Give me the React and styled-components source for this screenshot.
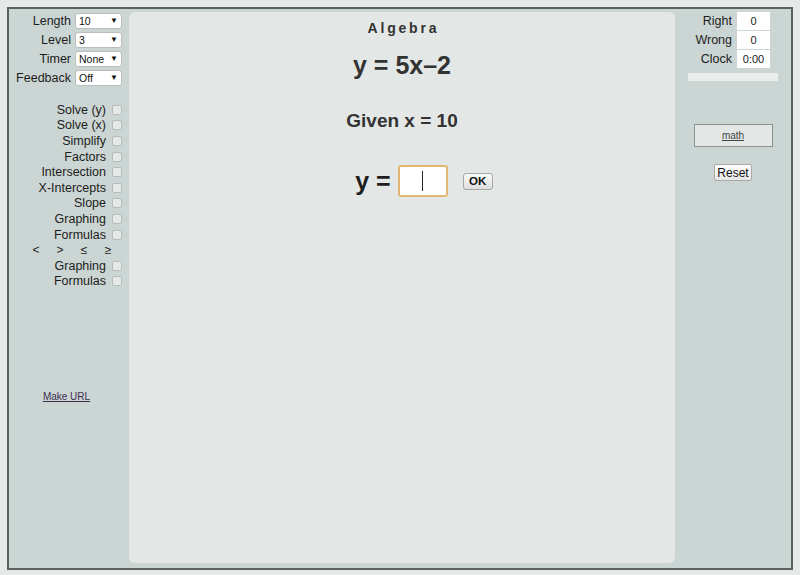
import React from 'react';
import styled, { createGlobalStyle } from 'styled-components';

const GlobalStyle = createGlobalStyle`
  body {
    margin: 0;
    background: #e6e9e8;
    font-family: "Liberation Sans", Arial, sans-serif;
  }
`;

const Frame = styled.div`
  margin: 7px;
  width: 782px;
  height: 559px;
  border: 2px solid #59625f;
  background: #cbd5d3;
  display: grid;
  grid-template-columns: 120px 546px 116px;
`;

const LeftPanel = styled.div`
  padding-top: 2px;
  display: flex;
  flex-direction: column;
`;

const SelectRow = styled.div`
  height: 19px;
  display: flex;
  align-items: center;
`;

const FieldLabel = styled.span`
  width: 62px;
  text-align: right;
  font-size: 12.5px;
  color: #1d1d1d;
  margin-right: 4px;
`;

const SelectBox = styled.div`
  width: 47px;
  height: 16px;
  box-sizing: border-box;
  background: #fff;
  border: 1px solid #b9bebd;
  border-radius: 3px;
  display: flex;
  align-items: center;
  justify-content: space-between;
  padding: 0 3px 0 3px;
  font-size: 10.5px;
  color: #111;
`;

const Arrow = styled.span`
  font-size: 8px;
  color: #111;
`;

const CheckList = styled.div`
  margin-top: 15px;
  display: flex;
  flex-direction: column;
`;

const CheckRow = styled.div`
  height: 15.6px;
  display: flex;
  align-items: center;
  justify-content: flex-end;
  padding-right: 7px;
  font-size: 12.5px;
  color: #1d1d1d;
`;

const Box = styled.span`
  width: 10px;
  height: 10px;
  box-sizing: border-box;
  margin-left: 6px;
  border: 1px solid #b5bcbb;
  border-radius: 2px;
  background: #e5e9e8;
`;

const SymbolRow = styled.div`
  height: 15.6px;
  display: flex;
  align-items: center;
  padding-left: 23px;
  gap: 16px;
  font-size: 12px;
  color: #1d1d1d;

  span {
    width: 8px;
    text-align: center;
  }
`;

const MakeUrl = styled.a`
  margin-top: 102px;
  align-self: center;
  font-size: 10px;
  line-height: 12px;
  color: #3b3050;
  text-decoration: underline;
  margin-left: -5px;
`;

const CenterPanel = styled.div`
  margin: 3px 0 5px;
  background: #e3e7e6;
  border-radius: 6px;
  display: flex;
  flex-direction: column;
  align-items: center;
  color: #333;
  font-weight: bold;
`;

const Title = styled.div`
  margin-top: 8px;
  line-height: 16px;
  font-size: 14px;
  letter-spacing: 2.8px;
  margin-right: -2.8px;
`;

const Equation = styled.div`
  margin-top: 14px;
  line-height: 30px;
  font-size: 25px;
`;

const Given = styled.div`
  margin-top: 29px;
  line-height: 24px;
  font-size: 19px;
`;

const AnswerRow = styled.div`
  margin-top: 32px;
  height: 32px;
  display: flex;
  align-items: center;
  margin-left: 44px;
`;

const AnswerLabel = styled.span`
  font-size: 25px;
  color: #1e1e1e;
  margin-right: 7px;
`;

const AnswerBox = styled.div`
  width: 50px;
  height: 32px;
  box-sizing: border-box;
  background: #fff;
  border: 2px solid #e2b774;
  border-radius: 3px;
  display: flex;
  align-items: center;
  justify-content: center;
`;

const Caret = styled.span`
  width: 1px;
  height: 20px;
  background: #222;
`;

const OkButton = styled.button`
  margin-left: 15px;
  width: 30px;
  height: 17px;
  padding: 0;
  font-family: inherit;
  font-size: 11.5px;
  font-weight: bold;
  color: #111;
  background: linear-gradient(#fbfbfb, #dedede);
  border: 1px solid #a8a8a8;
  border-radius: 3px;
`;

const RightPanel = styled.div`
  padding-top: 3px;
  display: flex;
  flex-direction: column;
  align-items: center;
`;

const StatRow = styled.div`
  align-self: stretch;
  height: 19px;
  display: flex;
  align-items: flex-start;
  justify-content: flex-end;
  padding-right: 21px;
`;

const StatLabel = styled.span`
  font-size: 12.5px;
  line-height: 18px;
  color: #1d1d1d;
  margin-right: 5px;
`;

const StatValue = styled.div`
  width: 33px;
  height: 18px;
  background: #fff;
  font-size: 11px;
  line-height: 18px;
  text-align: center;
  color: #222;
`;

const Progress = styled.div`
  margin-top: 4px;
  width: 90px;
  height: 8px;
  background: #e9edec;
`;

const LinkBox = styled.div`
  margin-top: 43px;
  width: 79px;
  height: 23px;
  box-sizing: border-box;
  border: 1px solid #8c9291;
  background: #e3e7e6;
  display: flex;
  align-items: center;
  justify-content: center;
`;

const SmallLink = styled.a`
  font-size: 10px;
  color: #444;
  text-decoration: underline;
`;

const ResetButton = styled.button`
  margin-top: 17px;
  width: 38px;
  height: 17px;
  padding: 0;
  font-family: inherit;
  font-size: 12px;
  color: #111;
  background: linear-gradient(#fdfdfd, #e6e6e6);
  border: 1px solid #aaa;
  border-radius: 2px;
`;

const settings = [
  ['Length', '10'],
  ['Level', '3'],
  ['Timer', 'None'],
  ['Feedback', 'Off'],
];

const topics = ['Solve (y)', 'Solve (x)', 'Simplify', 'Factors', 'Intersection', 'X-Intercepts', 'Slope', 'Graphing', 'Formulas'];
const inequalityTopics = ['Graphing', 'Formulas'];

const stats = [
  ['Right', '0'],
  ['Wrong', '0'],
  ['Clock', '0:00'],
];

export default function App() {
  return (
    <>
      <GlobalStyle />
      <Frame>
        <LeftPanel>
          {settings.map(([label, value]) => (
            <SelectRow key={label}>
              <FieldLabel>{label}</FieldLabel>
              <SelectBox>
                {value}
                <Arrow>▼</Arrow>
              </SelectBox>
            </SelectRow>
          ))}
          <CheckList>
            {topics.map((t) => (
              <CheckRow key={t}>
                {t}
                <Box />
              </CheckRow>
            ))}
            <SymbolRow>
              <span>&lt;</span>
              <span>&gt;</span>
              <span>≤</span>
              <span>≥</span>
            </SymbolRow>
            {inequalityTopics.map((t) => (
              <CheckRow key={'i' + t}>
                {t}
                <Box />
              </CheckRow>
            ))}
          </CheckList>
          <MakeUrl>Make URL</MakeUrl>
        </LeftPanel>

        <CenterPanel>
          <Title>Algebra</Title>
          <Equation>y = 5x–2</Equation>
          <Given>Given x = 10</Given>
          <AnswerRow>
            <AnswerLabel>y =</AnswerLabel>
            <AnswerBox>
              <Caret />
            </AnswerBox>
            <OkButton>OK</OkButton>
          </AnswerRow>
        </CenterPanel>

        <RightPanel>
          {stats.map(([label, value]) => (
            <StatRow key={label}>
              <StatLabel>{label}</StatLabel>
              <StatValue>{value}</StatValue>
            </StatRow>
          ))}
          <Progress />
          <LinkBox>
            <SmallLink>math</SmallLink>
          </LinkBox>
          <ResetButton>Reset</ResetButton>
        </RightPanel>
      </Frame>
    </>
  );
}
